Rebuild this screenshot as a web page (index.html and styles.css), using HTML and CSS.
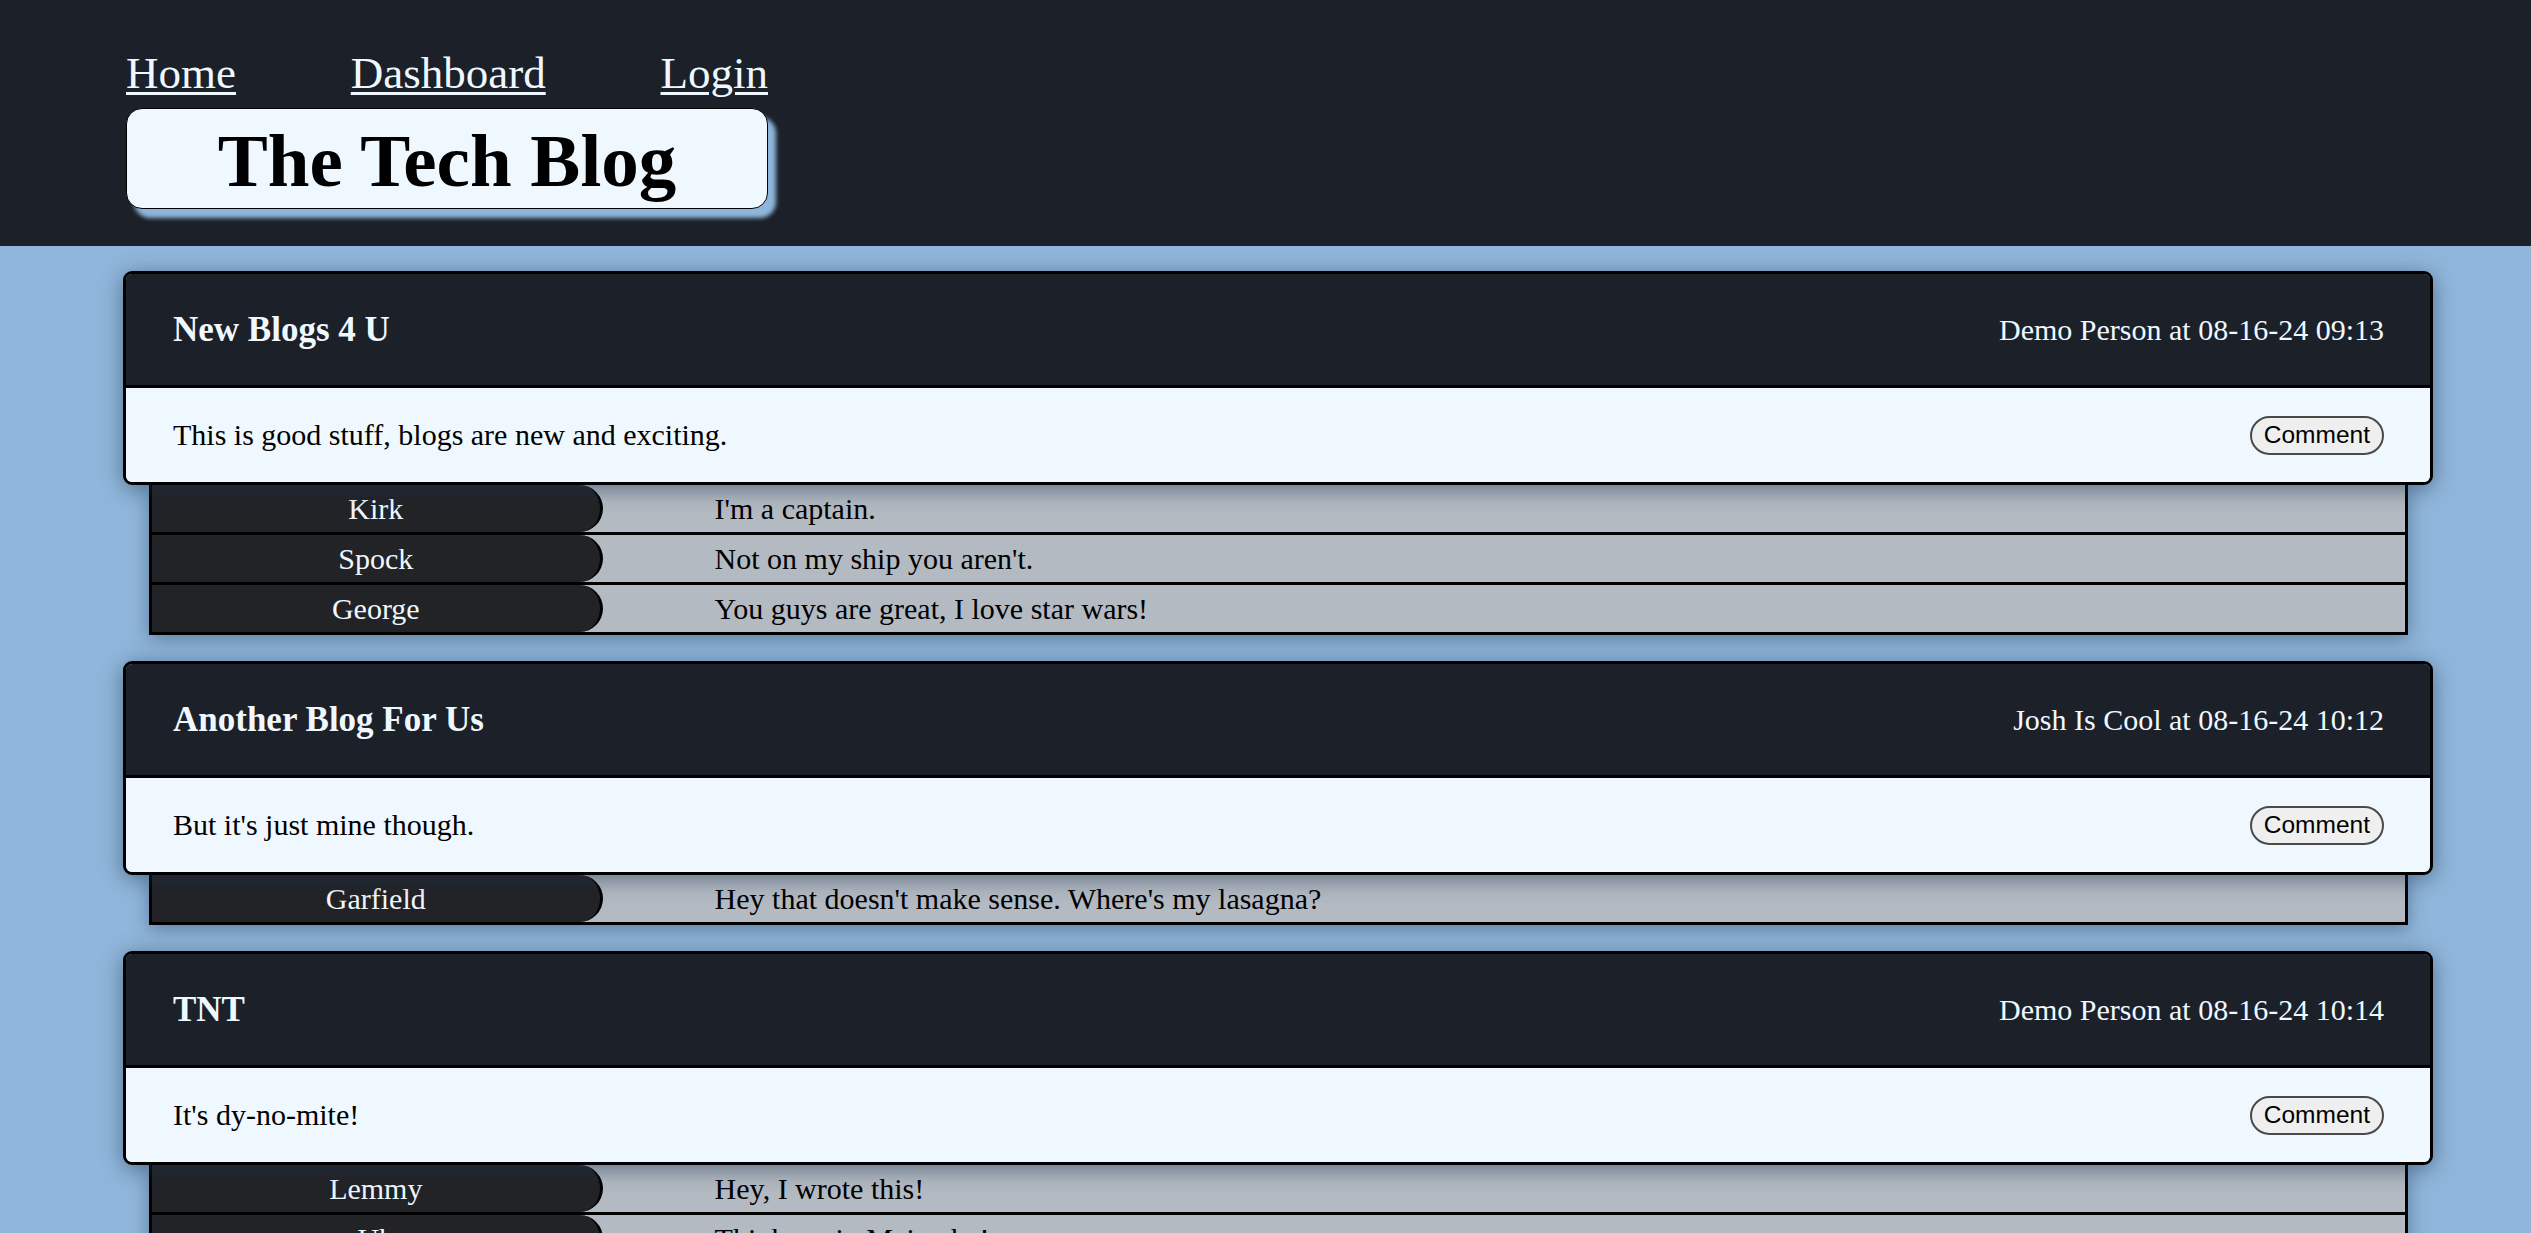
FILE: index.html
```html
<!DOCTYPE html>
<html lang="en">
<head>
<meta charset="utf-8">
<title>The Tech Blog</title>
<link rel="stylesheet" href="styles.css">
</head>
<body>
<header class="site-header">
  <div class="brand">
    <nav class="nav">
      <a href="#">Home</a>
      <a href="#">Dashboard</a>
      <a href="#">Login</a>
    </nav>
    <h1 class="title">The Tech Blog</h1>
  </div>
</header>
<main class="feed">
  <section class="post">
    <article class="card">
      <div class="card-head">
        <h3>New Blogs 4 U</h3>
        <span class="meta">Demo Person at 08-16-24 09:13</span>
      </div>
      <div class="card-body">
        <p>This is good stuff, blogs are new and exciting.</p>
        <button class="btn">Comment</button>
      </div>
    </article>
    <ul class="comments">
      <li><span class="who">Kirk</span><span class="what">I'm a captain.</span></li>
      <li><span class="who">Spock</span><span class="what">Not on my ship you aren't.</span></li>
      <li><span class="who">George</span><span class="what">You guys are great, I love star wars!</span></li>
    </ul>
  </section>
  <section class="post">
    <article class="card">
      <div class="card-head">
        <h3>Another Blog For Us</h3>
        <span class="meta">Josh Is Cool at 08-16-24 10:12</span>
      </div>
      <div class="card-body">
        <p>But it's just mine though.</p>
        <button class="btn">Comment</button>
      </div>
    </article>
    <ul class="comments">
      <li><span class="who">Garfield</span><span class="what">Hey that doesn't make sense. Where's my lasagna?</span></li>
    </ul>
  </section>
  <section class="post">
    <article class="card">
      <div class="card-head">
        <h3>TNT</h3>
        <span class="meta">Demo Person at 08-16-24 10:14</span>
      </div>
      <div class="card-body">
        <p>It's dy-no-mite!</p>
        <button class="btn">Comment</button>
      </div>
    </article>
    <ul class="comments">
      <li><span class="who">Lemmy</span><span class="what">Hey, I wrote this!</span></li>
      <li><span class="who">Uh</span><span class="what">Think again Majamba!</span></li>
    </ul>
  </section>
</main>
</body>
</html>
```

FILE: styles.css
```css
html, body {
  margin: 0;
  padding: 0;
}

body {
  background: #90b7db;
  font-family: "Liberation Serif", "Times New Roman", serif;
  font-size: 30px;
  color: #000;
}

.site-header {
  background: #1b2029;
  padding: 47px 0 37px 126px;
}

.brand {
  width: 642px;
}

.nav {
  display: flex;
  justify-content: space-between;
  font-size: 45px;
  line-height: 52px;
}

.nav a {
  color: #f0f8ff;
  text-decoration: underline;
  text-decoration-thickness: 3px;
  text-underline-offset: 4px;
}

.title {
  margin: 9px 0 0 0;
  height: 101px;
  box-sizing: border-box;
  background: #f0f8ff;
  border: 1px solid #000;
  border-radius: 16px;
  box-shadow: 8px 9px 4px #8fb6da;
  font-size: 75px;
  font-weight: bold;
  line-height: 86px;
  padding-top: 9px;
  text-align: center;
}

.feed {
  padding: 25px 98px 0 123px;
}

.post {
  margin-bottom: 26px;
}

.card {
  border: 3px solid #000;
  border-radius: 9px;
  overflow: hidden;
  box-shadow: 0 4px 22px rgba(30, 50, 80, 0.55);
  position: relative;
  z-index: 1;
}

.card-head {
  background: #1c2029;
  color: #f0f8ff;
  display: flex;
  justify-content: space-between;
  align-items: center;
  padding: 0 46px 0 47px;
  border-bottom: 3px solid #000;
}

.card-head h3 {
  margin: 0;
  font-size: 35px;
  line-height: 40px;
  padding: 36px 0 35px;
  font-weight: bold;
}

.meta {
  font-size: 30px;
}

.card-body {
  background: #f0f8ff;
  display: flex;
  justify-content: space-between;
  align-items: center;
  padding: 0 46px 0 47px;
  height: 94px;
}

.card-body p {
  margin: 0;
  line-height: 34px;
}

.btn {
  font-family: "Liberation Sans", Arial, sans-serif;
  font-size: 24.5px;
  line-height: 28px;
  height: 39px;
  box-sizing: border-box;
  padding: 3px 12px;
  border: 2px solid #4a4a4a;
  border-radius: 20px;
  background: #efefef;
  color: #000;
}

.comments {
  list-style: none;
  margin: 0 25px 0 26px;
  padding: 0;
  border: 3px solid #000;
  border-top: none;
  box-shadow: 0 4px 18px rgba(30, 50, 80, 0.45);
}

.comments li {
  display: flex;
  align-items: stretch;
  height: 47px;
  background: #b3bac2;
  border-bottom: 3px solid #000;
}

.comments li:last-child {
  border-bottom: none;
}

.who {
  flex: 0 0 20%;
  box-sizing: border-box;
  background: #222326;
  color: #f0f8ff;
  border-right: 3px solid #000;
  border-radius: 0 25px 25px 0;
  display: flex;
  align-items: center;
  justify-content: center;
  line-height: 34px;
}

.what {
  display: flex;
  align-items: center;
  padding-left: 112px;
  line-height: 34px;
}
```
